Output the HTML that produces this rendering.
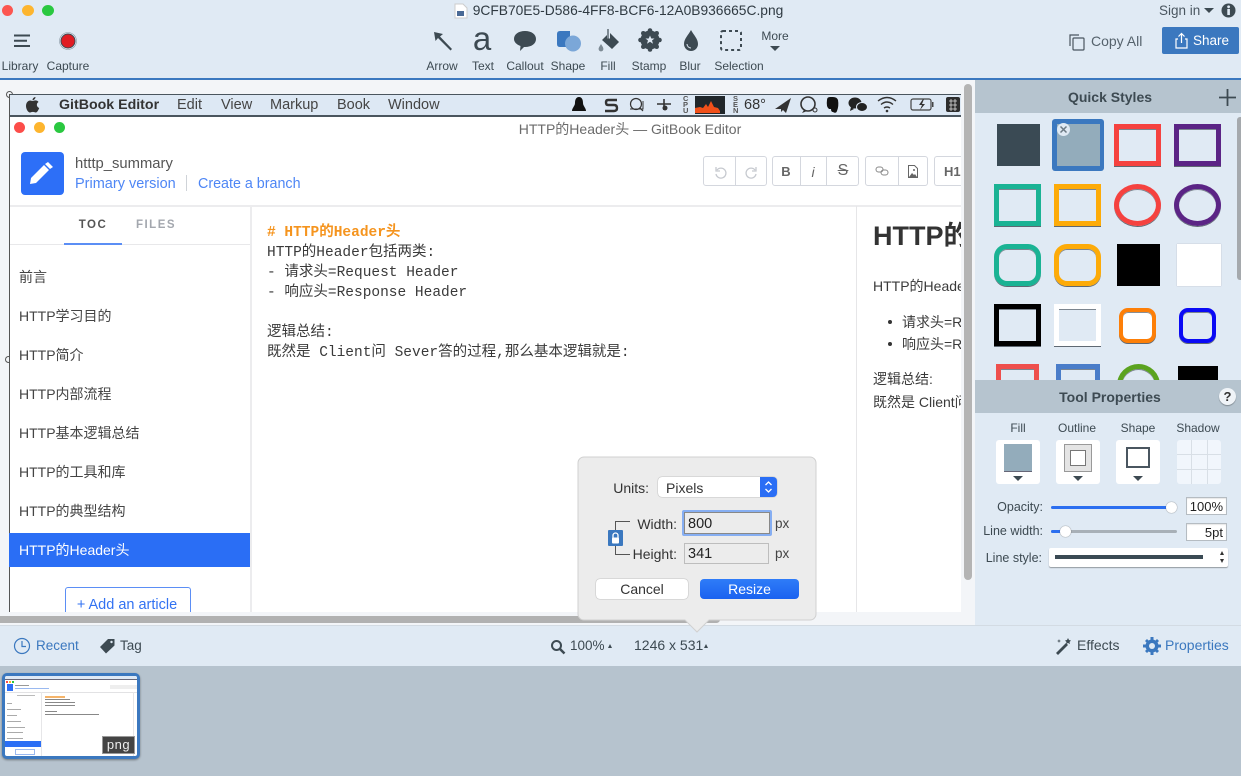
<!DOCTYPE html>
<html><head><meta charset="utf-8"><style>
*{box-sizing:border-box}
html,body{margin:0;padding:0;width:1241px;height:776px;overflow:hidden;background:#e0eaf4}
body{position:relative;font-family:"Liberation Sans","Noto Sans CJK SC",sans-serif;color:#3d4a52;font-size:13px;filter:blur(.35px)}
.a,.t,svg.a{position:absolute}
.t{white-space:nowrap;line-height:16px}
.c{transform:translateX(-50%)}
.r{transform:translateX(-100%)}
.qs{position:absolute;box-shadow:0 1px 0 rgba(40,50,60,.7),inset 0 1px 0 rgba(40,50,60,.55)}
.tile{position:absolute;top:440px;width:44px;height:44px;background:#fff;border-radius:3px}
.tri{position:absolute;width:0;height:0;border-left:5px solid transparent;border-right:5px solid transparent;border-top:5px solid #3d4a52}
.toc{position:absolute;left:19px;font-size:14px;line-height:18px;color:#444;white-space:nowrap}
.ed{position:absolute;left:267px;font-family:"Liberation Mono","Noto Sans CJK SC",monospace;font-size:14.5px;line-height:20px;color:#3a3a3a;white-space:pre}
.btn{position:absolute;top:156px;height:30px;border:1px solid #d4d7de;border-radius:3px;background:#fff}
.sep{position:absolute;top:0;width:1px;height:28px;background:#d4d7de}
.inp{position:absolute;background:#fff;border:1px solid #b5bcc2;font-size:13px;text-align:right;padding-right:3px;color:#222;box-shadow:inset 0 1px 1px rgba(0,0,0,.1)}
</style></head><body>

<!-- Title/toolbar -->
<div class="a" style="left:0;top:0;width:1241px;height:78px;background:#e0eaf4"></div>
<div class="a" style="left:0;top:78px;width:1241px;height:2px;background:#3b78bf"></div>
<div class="a" style="left:2px;top:5px;width:11px;height:11px;border-radius:50%;background:#fc5650"></div>
<div class="a" style="left:22px;top:5px;width:12px;height:11px;border-radius:50%;background:#fdb52e"></div>
<div class="a" style="left:42px;top:5px;width:12px;height:11px;border-radius:50%;background:#2ac840"></div>
<svg class="a" style="left:454px;top:3px" width="14" height="16" viewBox="0 0 14 16"><path d="M1 1h8l4 4v10H1z" fill="#fff" stroke="#ccc"/><rect x="3" y="8" width="7" height="5" fill="#4a6a96"/></svg>
<div class="t c" style="left:628px;top:3px;font-size:13.800px;color:#2f3a42">9CFB70E5-D586-4FF8-BCF6-12A0B936665C.png</div>
<div class="t" style="left:1159px;top:3px;font-size:13.500px;color:#4a5660">Sign in</div>
<div class="tri" style="left:1204px;top:8px;border-top-color:#3d4a52"></div>
<svg class="a" style="left:1221px;top:3px" width="15" height="15"><circle cx="7.500" cy="7.500" r="7" fill="#3d4a52"/><rect x="6.300" y="6" width="2.600" height="6" fill="#e0eaf4"/><circle cx="7.600" cy="3.800" r="1.400" fill="#e0eaf4"/></svg>

<svg class="a" style="left:14px;top:34px" width="18" height="14"><path d="M0 1.500h16M0 6.700h13M0 12h16" stroke="#3d4a52" stroke-width="2"/></svg>
<svg class="a" style="left:58px;top:31px" width="20" height="20"><circle cx="10" cy="10" r="7" fill="#e01b22" stroke="#3d4a52" stroke-width="1"/><circle cx="10" cy="10" r="8.500" fill="none" stroke="#8a98a4" stroke-width=".6"/></svg>
<div class="t c" style="left:20px;top:58px;font-size:12px">Library</div>
<div class="t c" style="left:68px;top:58px;font-size:12px">Capture</div>

<svg class="a" style="left:432px;top:30px" width="22" height="22"><path d="M2 2l9 2-3 2.500L20 19l-1.500 1.500L6 8l-2.500 3z" fill="#3d4a52"/></svg>
<div class="t c" style="left:482px;top:19px;font-size:33px;line-height:40px;color:#3d4a52">a</div>
<svg class="a" style="left:513px;top:29px" width="24" height="24"><path d="M12 2c6.500 0 11 3.300 11 8s-4.500 8-11 8h-1l-4 4 .5-5C3.500 15.500 1 13 1 10c0-4.700 4.500-8 11-8z" fill="#3d4a52"/></svg>
<svg class="a" style="left:555px;top:29px" width="28" height="24"><path d="M2 5q0-3 3-3h10v16H5q-3 0-3-3z" fill="#3b78bf"/><circle cx="18" cy="14.500" r="8" fill="#7ba7d8"/></svg>
<svg class="a" style="left:597px;top:28px" width="24" height="26"><path d="M11 1v10" stroke="#3d4a52" stroke-width="1.200"/><path d="M13 5l9 9-7 7-10-9 5-5v3.500h3z" fill="#3d4a52"/><path d="M4 16c1.500 2.500 2.400 3.500 2.400 5a2.400 2.400 0 0 1-4.800 0c0-1.500 1-2.500 2.400-5z" fill="#7d8a94"/></svg>
<svg class="a" style="left:638px;top:28px" width="24" height="24"><g fill="#3d4a52"><circle cx="12" cy="12" r="9.500"/><circle cx="12" cy="2.500" r="2.300"/><circle cx="12" cy="21.500" r="2.300"/><circle cx="2.500" cy="12" r="2.300"/><circle cx="21.500" cy="12" r="2.300"/><circle cx="5.300" cy="5.300" r="2.300"/><circle cx="18.700" cy="5.300" r="2.300"/><circle cx="5.300" cy="18.700" r="2.300"/><circle cx="18.700" cy="18.700" r="2.300"/></g><path d="M12 7.500l1.300 3h3.200l-2.500 2 1 3.200-3-1.900-3 1.900 1-3.200-2.500-2h3.200z" fill="#e0eaf4"/></svg>
<svg class="a" style="left:682px;top:29px" width="18" height="23"><path d="M9 1c2.500 5 7 8.500 7 14a7 7 0 0 1-14 0C2 9.500 6.500 6 9 1z" fill="#3d4a52"/><path d="M5 15a4 4 0 0 0 4 4" stroke="#e0eaf4" fill="none"/></svg>
<svg class="a" style="left:720px;top:30px" width="22" height="22"><rect x="1" y="1" width="20" height="19" rx="2" fill="none" stroke="#3d4a52" stroke-width="2" stroke-dasharray="3 3"/></svg>
<div class="t c" style="left:775px;top:28px;font-size:12px">More</div>
<div class="tri" style="left:770px;top:46px;border-left-width:5px;border-right-width:5px"></div>

<div class="t c" style="left:442px;top:58px;font-size:12px">Arrow</div>
<div class="t c" style="left:483px;top:58px;font-size:12px">Text</div>
<div class="t c" style="left:525px;top:58px;font-size:12px">Callout</div>
<div class="t c" style="left:568px;top:58px;font-size:12px">Shape</div>
<div class="t c" style="left:608px;top:58px;font-size:12px">Fill</div>
<div class="t c" style="left:649px;top:58px;font-size:12px">Stamp</div>
<div class="t c" style="left:690px;top:58px;font-size:12px">Blur</div>
<div class="t c" style="left:739px;top:58px;font-size:12px">Selection</div>

<svg class="a" style="left:1068px;top:33px" width="18" height="18"><rect x="5" y="5" width="11" height="12" rx="1" fill="none" stroke="#4a5660" stroke-width="1.200"/><path d="M2 13V2h9" fill="none" stroke="#4a5660" stroke-width="1.200"/></svg>
<div class="t" style="left:1091px;top:33px;font-size:14px;color:#55626c">Copy All</div>
<div class="a" style="left:1162px;top:27px;width:77px;height:27px;background:#3b78bf;border-radius:2px"></div>
<svg class="a" style="left:1174px;top:32px" width="16" height="18"><path d="M4 7H2v9h11V7h-2M7.500 11V1.500M4.500 4.500l3-3 3 3" fill="none" stroke="#fff" stroke-width="1.200"/></svg>
<div class="t" style="left:1193px;top:33px;font-size:13.500px;color:#fff">Share</div>

<!-- Canvas -->
<div class="a" style="left:0;top:80px;width:975px;height:546px;background:#f3f5f8;overflow:hidden">
  <div class="a" style="left:6px;top:11px;width:7px;height:7px;border:1px solid #555;border-radius:50%;background:#f3f5f8"></div>
  <div class="a" style="left:5px;top:276px;width:7px;height:7px;border:1px solid #555;border-radius:50%;background:#f3f5f8"></div>
</div>

<!-- Screenshot contents -->
<div class="a" style="left:9px;top:94px;width:952px;height:518px;background:#fff;overflow:hidden;border-left:1px solid #555">
  <div class="a" style="left:-1px;top:0;width:953px;height:23px;background:#dde8f4;border-top:1px solid #4a555e;border-bottom:2px solid #4a555e"></div>
</div>
<!-- menu bar -->
<svg class="a" style="left:25px;top:96px" width="16" height="17"><path d="M10.500 1c0 1.800-1.500 3.200-3 3.200C7.400 2.500 9 1 10.500 1zM7.500 5c1 0 1.700-.6 3-.6 1.200 0 2.300.6 3 1.600-2.500 1.500-2 5 .7 6-.7 2-2 4.500-3.500 4.500-1 0-1.500-.6-2.800-.6-1.400 0-1.900.6-2.900.6C3 16.500 1 13 1 10c0-3.300 2.100-5.500 4.200-5.500 1 0 1.700.5 2.300.5z" fill="#333"/></svg>
<div class="t" style="left:59px;top:97px;font-size:14.200px;font-weight:bold;color:#333">GitBook Editor</div>
<div class="t" style="left:177px;top:97px;font-size:14.500px;color:#444">Edit</div>
<div class="t" style="left:221px;top:97px;font-size:14.500px;color:#444">View</div>
<div class="t" style="left:270px;top:97px;font-size:14.500px;color:#444">Markup</div>
<div class="t" style="left:337px;top:97px;font-size:14.500px;color:#444">Book</div>
<div class="t" style="left:388px;top:97px;font-size:14.500px;color:#444">Window</div>

<svg class="a" style="left:570px;top:96px" width="391" height="18" viewBox="570 96 391 18">
  <path d="M579 97c3 0 4 3 4 6 0 3 3 5 3 8h-14c0-3 3-5 3-8 0-3 1-6 4-6z" fill="#111"/>
  <path d="M617 100h-9q-2 0-2 2.500t2 2.500h6q3 0 3 3t-3 3h-9" fill="none" stroke="#333" stroke-width="2.400"/>
  <circle cx="636" cy="104" r="5.500" fill="none" stroke="#333" stroke-width="1.200"/><path d="M630 109h13v-8" fill="none" stroke="#333"/><path d="M640 108l3 3" stroke="#333" stroke-width="1.200"/>
  <path d="M657 104h14M664 99v11" stroke="#333" stroke-width="1.600"/><circle cx="665" cy="108" r="2.500" fill="#333"/>
  <rect x="695" y="96" width="30" height="18" fill="#20262a"/>
  <path d="M695 113v-5l5-1 3 1 3-4 2 3 3-6 3 6 4 1 2 3v2z" fill="#f0501a"/>
  <path d="M775 109l16-11-5 15-3-3-2 2v-3z" fill="#333"/>
  <circle cx="808" cy="104" r="7" fill="none" stroke="#333" stroke-width="1.600"/><path d="M804 110l-2 3 4-1.500" fill="#333"/><circle cx="815" cy="110" r="2" fill="#dfe9f5" stroke="#333"/>
  <path d="M827 100q0-3 3-3h3q4 0 5 3 1 6-1 11-1 3-4 1-2 0-2-3h-2q-3-2-2-9z" fill="#111"/>
  <ellipse cx="855" cy="103" rx="6.500" ry="5.500" fill="#222"/><ellipse cx="862" cy="107" rx="5.500" ry="4.500" fill="#222" stroke="#dfe9f5"/><path d="M851 107l-1 4 4-2z" fill="#222"/>
  <path d="M878 101q9-7 18 0M881 104.500q6-5 12 0M884 108q3-2 6 0" fill="none" stroke="#333" stroke-width="1.400"/><circle cx="887" cy="111" r="1.300" fill="#333"/>
  <rect x="911" y="99" width="20" height="11" rx="2" fill="none" stroke="#444" stroke-width="1.200"/><rect x="932" y="102" width="1.500" height="5" fill="#444"/><path d="M923 99l-4 6h3l-2 5 5-6h-3l2-5z" fill="#333"/>
  <rect x="946" y="97" width="14" height="15" rx="2" fill="#2d2d2d"/><path d="M949 101h8M949 105h8M949 109h8M951 99v12M955 99v12" stroke="#ddd" stroke-width=".8"/>
</svg>
<div class="t" style="left:683px;top:96px;font-size:7.500px;line-height:6px;width:8px;white-space:normal;color:#555;font-weight:bold">C P U</div>
<div class="t" style="left:733px;top:96px;font-size:7.500px;line-height:6px;width:8px;white-space:normal;color:#555;font-weight:bold">S E N</div>
<div class="t" style="left:744px;top:97px;font-size:14.500px;color:#333">68°</div>

<!-- gitbook window -->
<div class="a" style="left:14px;top:122px;width:11px;height:11px;border-radius:50%;background:#fc4d49"></div>
<div class="a" style="left:34px;top:122px;width:11px;height:11px;border-radius:50%;background:#fdb52e"></div>
<div class="a" style="left:54px;top:122px;width:11px;height:11px;border-radius:50%;background:#2ac840"></div>
<div class="t c" style="left:630px;top:121px;font-size:14px;color:#6b6b6b">HTTP的Header头 — GitBook Editor</div>

<div class="a" style="left:21px;top:152px;width:43px;height:43px;border-radius:4px;background:#2d6ff7"></div>
<svg class="a" style="left:28px;top:159px" width="28" height="28"><path d="M20 3l5 5-3 2-5-5zM16 6l5 5-13 13-6 1 1-6z" fill="#fff"/></svg>
<div class="t" style="left:75px;top:156px;font-size:14.800px;color:#555">htttp_summary</div>
<div class="t" style="left:75px;top:176px;font-size:14.500px;color:#4e86f5">Primary version</div>
<div class="a" style="left:186px;top:175px;width:1px;height:16px;background:#cfd3d8"></div>
<div class="t" style="left:198px;top:176px;font-size:14.300px;color:#4e86f5">Create a branch</div>

<div class="btn" style="left:703px;width:64px"><div class="sep" style="left:31px"></div></div>
<div class="btn" style="left:772px;width:87px"><div class="sep" style="left:27px"></div><div class="sep" style="left:53px"></div></div>
<div class="btn" style="left:865px;width:63px"><div class="sep" style="left:32px"></div></div>
<div class="btn" style="left:934px;width:40px;border-right:none"></div>
<div class="a" style="left:961px;top:116px;width:14px;height:100px;background:#f3f5f8"></div>
<svg class="a" style="left:712px;top:164px" width="50" height="16"><path d="M4 3v4h4M5 6a5 5 0 1 1-1 4" fill="none" stroke="#c6c9cf" stroke-width="1.300"/><path d="M44 3v4h-4M43 6a5 5 0 1 0 1 4" fill="none" stroke="#c6c9cf" stroke-width="1.300"/></svg>
<div class="t c" style="left:786px;top:164px;font-size:13px;font-weight:bold;color:#666">B</div>
<div class="t c" style="left:813px;top:164px;font-size:14px;font-style:italic;color:#666">i</div>
<div class="t c" style="left:843px;top:163px;font-size:16px;color:#666;text-decoration:line-through">S</div>
<svg class="a" style="left:875px;top:165px" width="14" height="12"><rect x="1" y="2" width="7" height="5" rx="2.500" fill="none" stroke="#888"/><rect x="6" y="5" width="7" height="5" rx="2.500" fill="none" stroke="#888"/></svg>
<svg class="a" style="left:907px;top:165px" width="12" height="13"><path d="M1.500.500h6l3 3v9h-9z" fill="none" stroke="#666"/><path d="M2 12l3-4 2 2 1-1 2 3z" fill="#666"/><circle cx="7" cy="5" r="1" fill="#666"/></svg>
<div class="t" style="left:944px;top:164px;font-size:13px;font-weight:bold;color:#666">H1</div>

<div class="a" style="left:10px;top:205px;width:951px;height:2px;background:#ececee"></div>
<div class="a" style="left:250px;top:206px;width:2px;height:406px;background:#ececee"></div>
<div class="a" style="left:856px;top:206px;width:1px;height:406px;background:#e6e6e8"></div>
<div class="a" style="left:10px;top:244px;width:240px;height:1px;background:#e8e8ea"></div>
<div class="t c" style="left:93px;top:217px;font-size:11.500px;font-weight:bold;letter-spacing:1.500px;color:#555">TOC</div>
<div class="t c" style="left:156px;top:217px;font-size:11.500px;font-weight:bold;letter-spacing:1.500px;color:#a3a7ae">FILES</div>
<div class="a" style="left:64px;top:243px;width:58px;height:2px;background:#5b8ef5"></div>

<div class="toc" style="top:268px">前言</div>
<div class="toc" style="top:307px">HTTP学习目的</div>
<div class="toc" style="top:346px">HTTP简介</div>
<div class="toc" style="top:385px">HTTP内部流程</div>
<div class="toc" style="top:424px">HTTP基本逻辑总结</div>
<div class="toc" style="top:463px">HTTP的工具和库</div>
<div class="toc" style="top:502px">HTTP的典型结构</div>
<div class="a" style="left:9px;top:533px;width:241px;height:34px;background:#2a6ef5"></div>
<div class="toc" style="top:541px;color:#fff">HTTP的Header头</div>
<div class="a" style="left:65px;top:587px;width:126px;height:25px;background:#fff;border:1px solid #5b8ef5;border-bottom:none;border-radius:3px 3px 0 0"></div>
<div class="t c" style="left:127px;top:597px;font-size:14.500px;color:#3272f2;height:15px;overflow:hidden">+ Add an article</div>

<div class="ed" style="top:223px;color:#f5941e;font-weight:bold"># HTTP的Header头</div>
<div class="ed" style="top:243px">HTTP的Header包括两类:</div>
<div class="ed" style="top:263px">- 请求头=Request Header</div>
<div class="ed" style="top:283px">- 响应头=Response Header</div>
<div class="ed" style="top:323px">逻辑总结:</div>
<div class="ed" style="top:343px">既然是 Client问 Sever答的过程,那么基本逻辑就是:</div>

<div class="a" style="left:857px;top:207px;width:104px;height:405px;overflow:hidden;background:#fff;color:#3a3a3a">
  <div class="t" style="left:16px;top:14px;font-size:27px;line-height:30px;font-weight:bold;color:#333">HTTP的Header头</div>
  <div class="t" style="left:16px;top:71px;font-size:14px">HTTP的Header包括两类:</div>
  <div class="a" style="left:31px;top:113px;width:4px;height:4px;border-radius:50%;background:#333"></div>
  <div class="t" style="left:45px;top:107px;font-size:14px">请求头=Request Header</div>
  <div class="a" style="left:31px;top:135px;width:4px;height:4px;border-radius:50%;background:#333"></div>
  <div class="t" style="left:45px;top:129px;font-size:14px">响应头=Response Header</div>
  <div class="t" style="left:16px;top:164px;font-size:14px">逻辑总结:</div>
  <div class="t" style="left:16px;top:187px;font-size:14px">既然是 Client问 Sever答的过程</div>
</div>

<!-- scrollbars -->
<div class="a" style="left:964px;top:84px;width:8px;height:496px;background:#b4b4b4;border-radius:4px"></div>
<div class="a" style="left:0;top:612px;width:975px;height:4px;background:#f3f5f8"></div>
<div class="a" style="left:0;top:616px;width:720px;height:7px;background:#b1b1b1;border-radius:0 4px 4px 0"></div>

<!-- Right panel -->
<div class="a" style="left:975px;top:80px;width:266px;height:546px;background:#e0eaf4;overflow:hidden"></div>
<div class="a" style="left:975px;top:80px;width:266px;height:33px;background:#b6c4cf"></div>
<div class="t c" style="left:1110px;top:89px;font-size:14px;font-weight:bold;color:#3d4a52">Quick Styles</div>
<svg class="a" style="left:1219px;top:89px" width="17" height="17"><path d="M8.500 0v17M0 8.500h17" stroke="#3d4a52" stroke-width="1.800"/></svg>
<div class="a" style="left:1237px;top:117px;width:4px;height:163px;background:#a5a9ad;border-radius:3px 0 0 3px"></div>

<div class="a" style="left:997px;top:124px;width:43px;height:42px;background:#3a4a54"></div>
<div class="a" style="left:1052px;top:119px;width:52px;height:52px;background:#3b78bf;border-radius:3px"></div>
<div class="a" style="left:1057px;top:124px;width:43px;height:42px;background:#93acbb"></div>
<div class="a" style="left:1057px;top:123px;width:13px;height:13px;border-radius:50%;background:#dfe9f3"></div>
<svg class="a" style="left:1057px;top:123px" width="13" height="13"><path d="M3.500 3.500l6 6M9.500 3.500l-6 6" stroke="#6c7a84" stroke-width="1.500"/></svg>
<div class="qs" style="left:1114px;top:124px;width:47px;height:42px;border:5px solid #f5423f"></div>
<div class="qs" style="left:1174px;top:124px;width:47px;height:42px;border:5px solid #5b2485"></div>
<div class="qs" style="left:994px;top:184px;width:47px;height:42px;border:5px solid #1ab394"></div>
<div class="qs" style="left:1054px;top:184px;width:47px;height:42px;border:5px solid #fdab08"></div>
<div class="qs" style="left:1114px;top:184px;width:47px;height:42px;border:5px solid #f5423f;border-radius:50%"></div>
<div class="qs" style="left:1174px;top:184px;width:47px;height:42px;border:5px solid #5b2485;border-radius:50%"></div>
<div class="qs" style="left:994px;top:244px;width:47px;height:42px;border:5px solid #1ab394;border-radius:13px"></div>
<div class="qs" style="left:1054px;top:244px;width:47px;height:42px;border:5px solid #fdab08;border-radius:13px"></div>
<div class="a" style="left:1117px;top:244px;width:43px;height:42px;background:#000"></div>
<div class="a" style="left:1177px;top:244px;width:44px;height:42px;background:#fff;box-shadow:0 0 1px #aab"></div>
<div class="qs" style="left:994px;top:304px;width:47px;height:42px;border:5px solid #000"></div>
<div class="qs" style="left:1054px;top:304px;width:47px;height:42px;border:5px solid #fff"></div>
<div class="qs" style="left:1119px;top:308px;width:37px;height:35px;border:4px solid #fd7f08;border-radius:9px;background:#fff"></div>
<div class="qs" style="left:1179px;top:308px;width:37px;height:35px;border:4px solid #0a0af5;border-radius:9px"></div>
<div class="a" style="left:975px;top:360px;width:262px;height:20px;overflow:hidden">
  <div class="qs" style="left:21px;top:4px;width:43px;height:42px;border:5px solid #ee4f4c"></div>
  <div class="qs" style="left:81px;top:4px;width:44px;height:42px;border:5px solid #4a7dc9"></div>
  <div class="qs" style="left:142px;top:4px;width:43px;height:42px;border:5px solid #5ba31f;border-radius:50%"></div>
  <div class="a" style="left:203px;top:6px;width:40px;height:40px;background:#000"></div>
</div>

<!-- Tool properties -->
<div class="a" style="left:975px;top:380px;width:266px;height:33px;background:#b6c4cf"></div>
<div class="t c" style="left:1110px;top:389px;font-size:14px;font-weight:bold;color:#3d4a52">Tool Properties</div>
<div class="a" style="left:1219px;top:388px;width:17px;height:17px;border-radius:50%;background:#f0f4f8;color:#333;font-size:13px;line-height:17px;text-align:center;font-weight:bold;box-shadow:0 1px 1px rgba(0,0,0,.3)">?</div>
<div class="t c" style="left:1018px;top:420px;font-size:12px">Fill</div>
<div class="t c" style="left:1077px;top:420px;font-size:12px">Outline</div>
<div class="t c" style="left:1138px;top:420px;font-size:12px">Shape</div>
<div class="t c" style="left:1198px;top:420px;font-size:12px">Shadow</div>

<div class="tile" style="left:996px"><div class="a" style="left:8px;top:4px;width:28px;height:28px;background:#93acbb;border-bottom:1px solid #667"></div><div class="tri" style="left:17px;top:36px"></div></div>
<div class="tile" style="left:1056px"><div class="a" style="left:8px;top:4px;width:28px;height:28px;background:#e4e4e4;border:1px solid #999"></div><div class="a" style="left:14px;top:10px;width:16px;height:16px;background:#fff;border:1px solid #777"></div><div class="tri" style="left:17px;top:36px"></div></div>
<div class="tile" style="left:1116px"><div class="a" style="left:10px;top:7px;width:24px;height:21px;background:#fff;border:2px solid #4a5660"></div><div class="tri" style="left:17px;top:36px"></div></div>
<div class="tile" style="left:1177px;background:#f1f6fc;box-shadow:none"><div class="a" style="left:14px;top:0;width:1px;height:44px;background:#d8dfe6"></div><div class="a" style="left:30px;top:0;width:1px;height:44px;background:#d8dfe6"></div><div class="a" style="left:0;top:14px;width:44px;height:1px;background:#d8dfe6"></div><div class="a" style="left:0;top:29px;width:44px;height:1px;background:#d8dfe6"></div></div>

<div class="t r" style="left:1043px;top:499px;font-size:12.500px">Opacity:</div>
<div class="a" style="left:1051px;top:506px;width:120px;height:3px;background:#2c6ff0;border-radius:2px"></div>
<div class="a" style="left:1166px;top:502px;width:11px;height:11px;border-radius:50%;background:#fff;box-shadow:0 0 1px #555"></div>
<div class="inp" style="left:1186px;top:497px;width:41px;height:18px;line-height:17px">100%</div>
<div class="t r" style="left:1043px;top:523px;font-size:12.500px">Line width:</div>
<div class="a" style="left:1051px;top:530px;width:126px;height:3px;background:#a8b0b7;border-radius:2px"></div>
<div class="a" style="left:1051px;top:530px;width:12px;height:3px;background:#2c6ff0;border-radius:2px"></div>
<div class="a" style="left:1060px;top:526px;width:11px;height:11px;border-radius:50%;background:#fff;box-shadow:0 0 1px #555"></div>
<div class="inp" style="left:1186px;top:523px;width:41px;height:18px;line-height:17px">5pt</div>
<div class="t r" style="left:1042px;top:550px;font-size:12.500px">Line style:</div>
<div class="a" style="left:1049px;top:548px;width:179px;height:19px;background:#fff;border-radius:2px;box-shadow:0 1px 1px rgba(0,0,0,.35)"></div>
<div class="a" style="left:1055px;top:555px;width:148px;height:4px;background:#3a4a54"></div>
<div class="a" style="left:1220px;top:551px;width:0;height:0;border-left:2.500px solid transparent;border-right:2.500px solid transparent;border-bottom:4px solid #333"></div>
<div class="a" style="left:1220px;top:559px;width:0;height:0;border-left:2.500px solid transparent;border-right:2.500px solid transparent;border-top:4px solid #333"></div>

<!-- Bottom bar -->
<div class="a" style="left:0;top:625px;width:1241px;height:41px;background:#e0eaf4;border-top:1px solid #d3dbe3"></div>
<svg class="a" style="left:13px;top:637px" width="18" height="18"><circle cx="9" cy="9" r="7.500" fill="none" stroke="#3b78bf" stroke-width="1.200"/><path d="M9 4v5.500h4" fill="none" stroke="#3b78bf" stroke-width="1.200"/></svg>
<div class="t" style="left:36px;top:638px;font-size:13.500px;color:#3b78bf">Recent</div>
<svg class="a" style="left:99px;top:638px" width="17" height="16"><path d="M9 1h6.500v6.500L7 15.500 1 9z" fill="#3d4a52"/><circle cx="12.500" cy="4" r="1.200" fill="#e0eaf4"/></svg>
<div class="t" style="left:120px;top:638px;font-size:13.500px">Tag</div>
<svg class="a" style="left:550px;top:639px" width="16" height="16"><circle cx="6.500" cy="6.500" r="4.500" fill="none" stroke="#3d4a52" stroke-width="2"/><path d="M10 10l4.500 4.500" stroke="#3d4a52" stroke-width="2.500"/></svg>
<div class="t" style="left:570px;top:638px;font-size:13.500px">100%</div>
<div class="a" style="left:608px;top:644px;width:0;height:0;border-left:2.500px solid transparent;border-right:2.500px solid transparent;border-bottom:4px solid #3d4a52"></div>
<div class="t" style="left:634px;top:637px;font-size:14px">1246 x 531</div>
<div class="a" style="left:704px;top:644px;width:0;height:0;border-left:2.500px solid transparent;border-right:2.500px solid transparent;border-bottom:4px solid #3d4a52"></div>
<svg class="a" style="left:1055px;top:637px" width="18" height="18"><path d="M1 16L11 6l2 2L3 18z" fill="#3d4a52"/><path d="M13 1l1 2 2 .5-1.500 1.500.5 2-2-1-2 1 .5-2L10 3.500l2-.5zM4 2l.5 1.500L6 4l-1.500.5L4 6l-.5-1.500L2 4l1.500-.5z" fill="#3d4a52"/></svg>
<div class="t" style="left:1077px;top:637px;font-size:14px">Effects</div>
<svg class="a" style="left:1143px;top:637px" width="18" height="18"><g fill="#3b78bf"><circle cx="9" cy="9" r="6.500"/><path d="M7.500 0h3v4h-3zM7.500 14h3v4h-3zM0 7.500h4v3H0zM14 7.500h4v3h-4zM2 4l2-2 3 3-2 2zM11 13l2-2 3 3-2 2zM14 2l2 2-3 3-2-2zM5 11l2 2-3 3-2-2z"/></g><circle cx="9" cy="9" r="3" fill="#e0eaf4"/></svg>
<div class="t" style="left:1165px;top:637px;font-size:14px;color:#3b78bf">Properties</div>

<!-- Thumb strip -->
<div class="a" style="left:0;top:666px;width:1241px;height:110px;background:#b6c3ce"></div>
<div class="a" style="left:2px;top:673px;width:138px;height:86px;background:#fff;border:3px solid #3b78bf;border-radius:5px;box-shadow:0 1px 2px rgba(0,0,0,.4);overflow:hidden">
  <div class="a" style="left:0;top:0;width:132px;height:4px;background:#dfe9f5;border-bottom:1px solid #667"></div>
  <div class="a" style="left:1px;top:5px;width:2px;height:2px;background:#fc4d49"></div>
  <div class="a" style="left:4px;top:5px;width:2px;height:2px;background:#fdb52e"></div>
  <div class="a" style="left:7px;top:5px;width:2px;height:2px;background:#2ac840"></div>
  <div class="a" style="left:2px;top:8px;width:6px;height:7px;background:#2d6ff7"></div>
  <div class="a" style="left:10px;top:9px;width:14px;height:1px;background:#999"></div>
  <div class="a" style="left:10px;top:12px;width:34px;height:1px;background:#9ab9f0"></div>
  <div class="a" style="left:105px;top:9px;width:27px;height:4px;background:#eee"></div>
  <div class="a" style="left:0;top:16px;width:132px;height:1px;background:#e2e2e4"></div>
  <div class="a" style="left:36px;top:16px;width:1px;height:64px;background:#e6e6e8"></div>
  <div class="a" style="left:128px;top:16px;width:1px;height:64px;background:#e6e6e8"></div>
  <div class="a" style="left:12px;top:19px;width:18px;height:1px;background:#bbb"></div>
  <div class="a" style="left:0;top:65px;width:36px;height:6px;background:#2a6ef5"></div>
  <div class="a" style="left:40px;top:20px;width:20px;height:2px;background:#f5b46a"></div>
  <div class="a" style="left:40px;top:23px;width:25px;height:1px;background:#888"></div>
  <div class="a" style="left:40px;top:26px;width:30px;height:1px;background:#888"></div>
  <div class="a" style="left:40px;top:29px;width:30px;height:1px;background:#888"></div>
  <div class="a" style="left:40px;top:35px;width:12px;height:1px;background:#888"></div>
  <div class="a" style="left:40px;top:38px;width:54px;height:1px;background:#888"></div>
  <div class="a" style="left:2px;top:27px;width:5px;height:1px;background:#aaa"></div>
  <div class="a" style="left:2px;top:33px;width:14px;height:1px;background:#aaa"></div>
  <div class="a" style="left:2px;top:39px;width:10px;height:1px;background:#aaa"></div>
  <div class="a" style="left:2px;top:45px;width:14px;height:1px;background:#aaa"></div>
  <div class="a" style="left:2px;top:51px;width:18px;height:1px;background:#aaa"></div>
  <div class="a" style="left:2px;top:56px;width:16px;height:1px;background:#aaa"></div>
  <div class="a" style="left:2px;top:62px;width:16px;height:1px;background:#aaa"></div>
  <div class="a" style="left:10px;top:73px;width:20px;height:6px;border:1px solid #9ab9f0"></div>
</div>
<div class="a" style="left:102px;top:736px;width:33px;height:18px;background:#444;border:1px solid #999;color:#eee;font-size:13px;line-height:15px;text-align:center;letter-spacing:.5px">png</div>

<!-- Resize dialog -->
<svg class="a" style="left:570px;top:450px" width="260" height="190"><path d="M14 7h226a6 6 0 0 1 6 6v151a6 6 0 0 1-6 6H139l-12 12-12-12H14a6 6 0 0 1-6-6V13a6 6 0 0 1 6-6z" fill="#ececec" stroke="#d0d0d0"/></svg>
<div class="t r" style="left:649px;top:480px;font-size:14px;color:#333">Units:</div>
<div class="a" style="left:658px;top:477px;width:119px;height:20px;background:#fff;border-radius:4px;box-shadow:0 0 1px rgba(0,0,0,.5)"></div>
<div class="t" style="left:666px;top:480px;font-size:14px;color:#333">Pixels</div>
<div class="a" style="left:760px;top:477px;width:17px;height:20px;background:#2a6ef5;border-radius:0 4px 4px 0"></div>
<svg class="a" style="left:763px;top:480px" width="11" height="14"><path d="M2.500 5l3-3 3 3M2.500 9l3 3 3-3" fill="none" stroke="#fff" stroke-width="1.300"/></svg>
<div class="t r" style="left:677px;top:516px;font-size:14px;color:#333">Width:</div>
<div class="a" style="left:682px;top:510px;width:90px;height:26px;border-radius:2px;border:3px solid #86aef2;background:#ececec"></div>
<div class="a" style="left:684px;top:512px;width:86px;height:22px;border:1px solid #888"></div>
<div class="t" style="left:688px;top:516px;font-size:14.500px;color:#222">800</div>
<div class="t" style="left:775px;top:516px;font-size:13.500px;color:#444">px</div>
<div class="t r" style="left:677px;top:546px;font-size:14px;color:#333">Height:</div>
<div class="a" style="left:684px;top:543px;width:85px;height:21px;background:#ececec;border:1px solid #bdbdbd"></div>
<div class="t" style="left:688px;top:546px;font-size:14.500px;color:#222">341</div>
<div class="t" style="left:775px;top:546px;font-size:13.500px;color:#444">px</div>
<div class="a" style="left:615px;top:521px;width:15px;height:1px;background:#555"></div>
<div class="a" style="left:615px;top:521px;width:1px;height:9px;background:#555"></div>
<div class="a" style="left:615px;top:546px;width:1px;height:8px;background:#555"></div>
<div class="a" style="left:615px;top:554px;width:15px;height:1px;background:#555"></div>
<div class="a" style="left:608px;top:530px;width:15px;height:16px;background:#3b78bf;border-radius:1px"></div>
<svg class="a" style="left:610px;top:531px" width="11" height="14"><path d="M3 7V4.500a2.500 2.500 0 0 1 5 0V7" fill="none" stroke="#fff" stroke-width="1.300"/><rect x="2" y="6.500" width="7" height="6" rx="1" fill="#fff"/></svg>
<div class="a" style="left:596px;top:579px;width:92px;height:20px;background:#fff;border-radius:4px;box-shadow:0 0 1px rgba(0,0,0,.5);text-align:center;font-size:14px;line-height:20px;color:#333">Cancel</div>
<div class="a" style="left:700px;top:579px;width:99px;height:20px;background:linear-gradient(#2f7cf8,#1a62f0);border-radius:4px;text-align:center;font-size:14px;line-height:20px;color:#fff">Resize</div>

</body></html>
